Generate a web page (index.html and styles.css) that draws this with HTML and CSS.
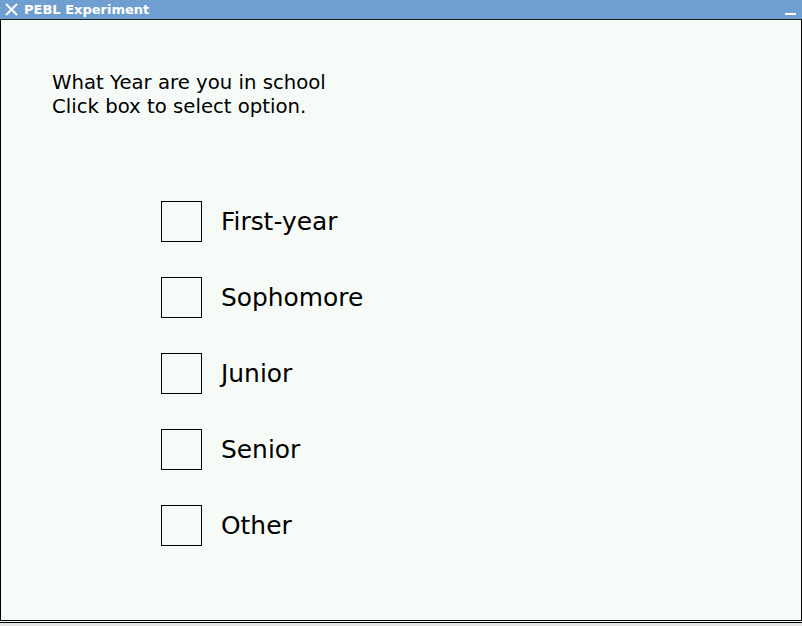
FILE: index.html
```html
<!DOCTYPE html>
<html>
<head>
<meta charset="utf-8">
<link rel="stylesheet" href="styles.css">
</head>
<body>
<div class="window">
  <div class="titlebar">
    <svg class="close" width="13" height="13" viewBox="0 0 13 13"><path d="M1 1 L12 12 M12 1 L1 12" stroke="#fff" stroke-width="2" fill="none"/></svg>
    <span class="title">PEBL Experiment</span>
    <span class="minimize"></span>
  </div>
  <div class="content">
    <div class="question">
      <div>What Year are you in school</div>
      <div>Click box to select option.</div>
    </div>
    <div class="options">
      <div class="option"><span class="box"></span><span class="label">First-year</span></div>
      <div class="option"><span class="box"></span><span class="label">Sophomore</span></div>
      <div class="option"><span class="box"></span><span class="label">Junior</span></div>
      <div class="option"><span class="box"></span><span class="label">Senior</span></div>
      <div class="option"><span class="box"></span><span class="label">Other</span></div>
    </div>
  </div>
  <div class="bottom"></div>
</div>
</body>
</html>
```
FILE: styles.css
```css
html, body {
  margin: 0;
  padding: 0;
  background: #e6e6e6;
}
.window {
  width: 802px;
  height: 626px;
  display: flex;
  flex-direction: column;
  font-family: "DejaVu Sans", sans-serif;
}
.titlebar {
  height: 19px;
  background: #6f9fd1;
  border-bottom: 1px solid #1a1a1a;
  display: flex;
  align-items: center;
  color: #fff;
  box-sizing: content-box;
}
.close {
  margin-left: 5px;
  margin-right: 6px;
}
.title {
  font-weight: bold;
  font-size: 13px;
  flex: 1;
  line-height: 19px;
}
.minimize {
  width: 11px;
  height: 2px;
  background: #fff;
  margin-right: 6px;
  margin-top: 9px;
}
.content {
  height: 600px;
  background: #f6fbf7;
  border-left: 1px solid #000;
  border-right: 1px solid #000;
  box-sizing: border-box;
}
.question {
  margin-top: 51px;
  padding-left: 51px;
  font-size: 19.7px;
  line-height: 24px;
  color: #000;
}
.options {
  margin-top: 82px;
  padding-left: 160px;
  display: flex;
  flex-direction: column;
  gap: 35px;
}
.option {
  display: flex;
  align-items: center;
  height: 41px;
}
.box {
  width: 41px;
  height: 41px;
  border: 1px solid #000;
  box-sizing: border-box;
}
.label {
  margin-left: 19px;
  font-size: 24.9px;
  color: #000;
}
.bottom {
  border-top: 1px solid #000;
  border-bottom: 1px solid #000;
  background: #f6fbf7;
  box-sizing: border-box;
  height: 3px;
}
```
